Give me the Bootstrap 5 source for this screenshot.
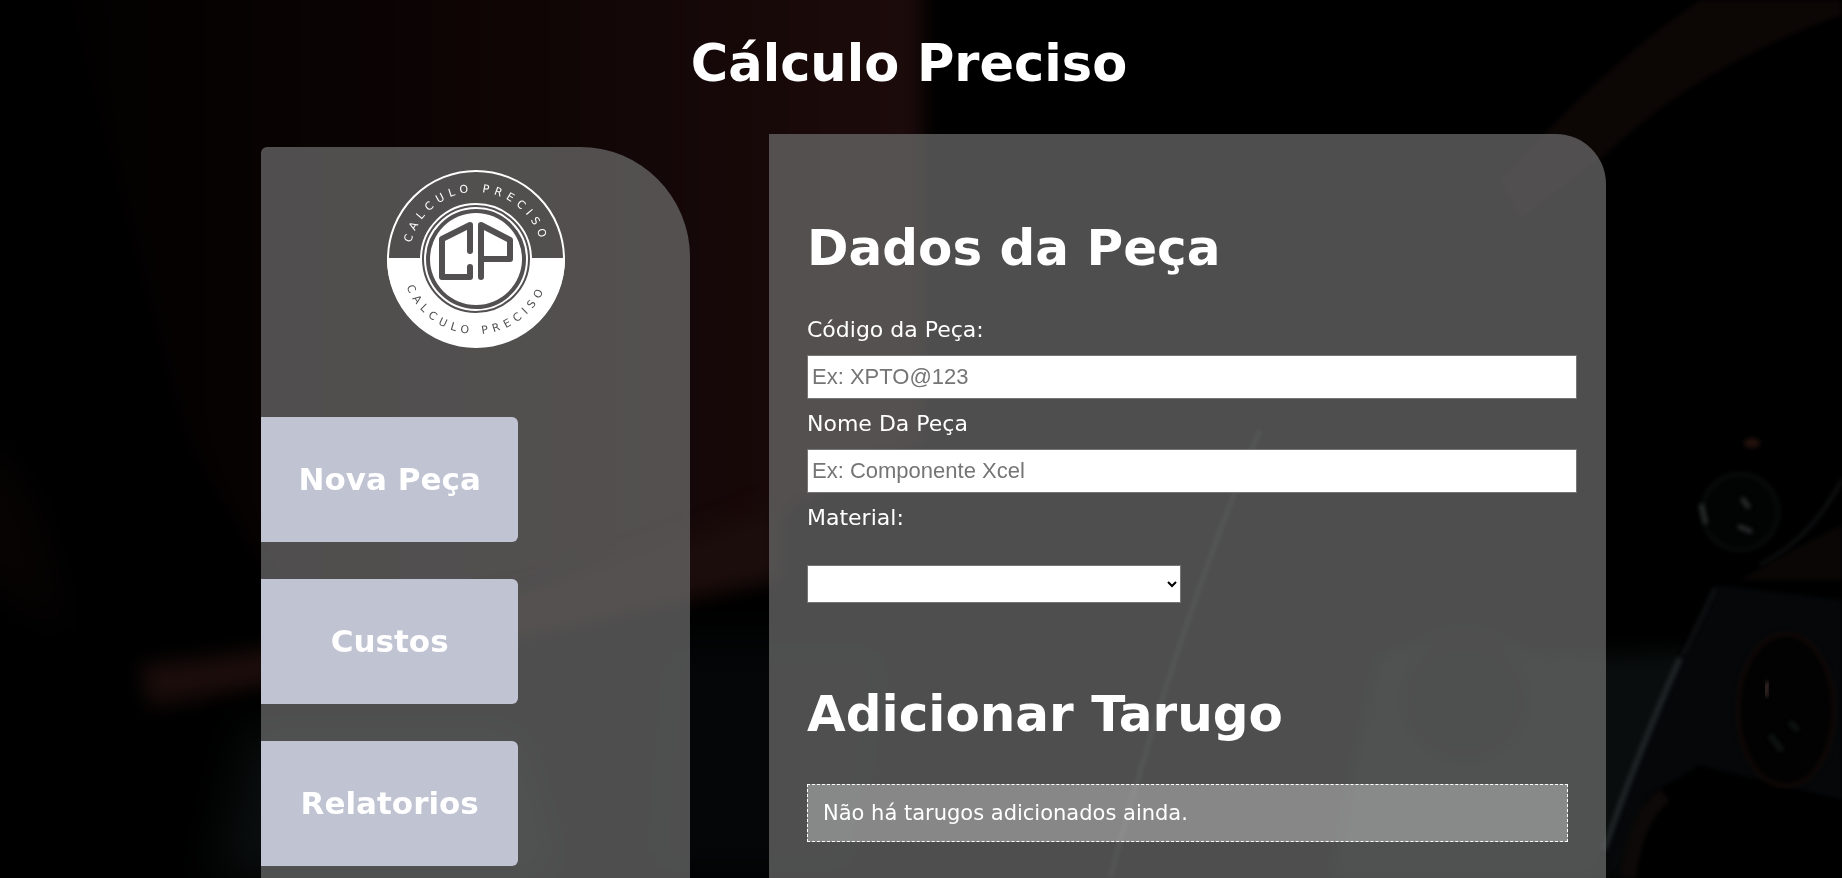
<!DOCTYPE html>
<html lang="pt-BR">
<head>
<meta charset="utf-8">
<meta name="viewport" content="width=device-width, initial-scale=1">
<title>Cálculo Preciso</title>
<link rel="stylesheet" href="https://cdn.jsdelivr.net/npm/bootstrap@5.3.0/dist/css/bootstrap.min.css">
<style>
  body { background: #000; color: #fff; font-family: "DejaVu Sans", sans-serif; font-size: 21px; line-height: 24px; }
  .backdrop-art { z-index: -1; }
  .backdrop-art filter { color-interpolation-filters: sRGB; }
  .site-title, .section-title { font-size: 50px; line-height: 60px; font-weight: 700; }
  .site-title { font-size: 51px; }
  .section-title { margin-bottom: 40px; }
  .page-header { padding: 34px 24px 40px 0; }
  .workspace { display: grid; grid-template-columns: 261fr 429fr 79fr minmax(0, 837fr) 236fr; }
  .panel-side, .panel-main { background: rgba(111, 111, 111, .7); }
  .panel-side { grid-column: 2; margin-top: 13px; padding: 23px 0 11px; border-radius: 6px 110px 0 0; }
  .panel-main { grid-column: 4; padding: 84px 29px 34px 38px; border-radius: 0 50px 0 0; }
  .brand-mark { width: 178px; height: 178px; margin-bottom: 69px; }
  .brand-mark text { font-family: "DejaVu Sans", sans-serif; font-size: 11px; letter-spacing: 5px; }
  .side-menu { gap: 37px; }
  .side-btn { width: 60%; height: 125px; padding: 0; border: 0; border-radius: 0 6px 6px 0; background: #c0c3d2; color: #fff; font-size: 31px; font-weight: 700; }
  .side-btn:hover { background: #a9aec4; color: #fff; }
  .field-label { margin-bottom: 13px; font-size: 22px; }
  .field-box { border: 1px solid #767676; border-radius: 0; background: #fff; font-family: "Liberation Sans", Arial, sans-serif; font-size: 22px; }
  input.field-box { height: 44px; padding: 0 4px; margin-bottom: 13px; }
  input.field-box::placeholder { color: #757575; opacity: 1; }
  select.field-box { width: 374px; max-width: 100%; height: 38px; margin-top: 35px; margin-bottom: 81px; }
  .empty-note { margin-right: 9px; padding: 16px 15px; border: 1px dashed #fff; background: rgba(255, 255, 255, .32); }
  @media (max-width: 991px) {
    .workspace { grid-template-columns: 1fr; gap: 24px; padding: 0 16px; }
    .panel-side, .panel-main { grid-column: 1; }
  }
</style>
</head>
<body class="min-vh-100 d-flex flex-column">

<svg class="backdrop-art position-fixed top-0 start-0 w-100 h-100" viewBox="0 0 1842 878" preserveAspectRatio="xMidYMid slice" aria-hidden="true">
  <defs>
    <filter id="haze" x="-30%" y="-30%" width="160%" height="160%"><feGaussianBlur stdDeviation="22"/></filter>
    <filter id="soft" x="-30%" y="-30%" width="160%" height="160%"><feGaussianBlur stdDeviation="10"/></filter>
    <filter id="edge" x="-30%" y="-30%" width="160%" height="160%"><feGaussianBlur stdDeviation="2"/></filter>
    <linearGradient id="door" x1="0" x2="1"><stop offset="0" stop-color="#020000"/><stop offset=".45" stop-color="#0d0404"/><stop offset="1" stop-color="#1d0b0b"/></linearGradient>
  </defs>
  <rect width="1842" height="878" fill="#000001"/>
  <!-- red bodywork on the left -->
  <path d="M60-30H922V440L700 550 300 620 190 440Z" fill="url(#door)" filter="url(#soft)"/>
  <path d="M-30 420L30 500 70 640-30 560Z" fill="#080303" filter="url(#haze)"/>
  <path d="M140 665Q430 640 780 500V580Q480 650 150 706Z" fill="#1b0d0b" filter="url(#soft)"/>
  <path d="M250 730H520L560 878H215Z" fill="#0a0e0e" filter="url(#haze)"/>
  <path d="M660 640H900L860 878H640Z" fill="#040607" filter="url(#haze)"/>
  <!-- wheel arch on the right -->
  <path d="M1500 180Q1610 60 1700 0H1842V15Q1700 65 1605 155L1520 220Z" fill="#0c0605" filter="url(#edge)"/>
  <!-- console and gear knobs -->
  <path d="M1260 430Q1180 620 1110 878" fill="none" stroke="#1c2020" stroke-width="4" filter="url(#edge)"/>
  <path d="M1380 650L1600 655 1700 650 1620 878H1330Z" fill="#090d0d" filter="url(#soft)"/>
  <ellipse cx="1465" cy="700" rx="70" ry="68" fill="#030404" stroke="#0e1212" stroke-width="6" filter="url(#soft)"/>
  <path d="M1715 585L1842 600V800L1700 765 1640 800 1606 878H1590L1680 660Z" fill="#050709" filter="url(#edge)"/>
  <path d="M1680 658Q1635 760 1604 850" fill="none" stroke="#1f2425" stroke-width="6" filter="url(#edge)"/>
  <path d="M1715 588L1683 655M1842 480Q1810 540 1760 565" fill="none" stroke="#131416" stroke-width="3" filter="url(#edge)"/>
  <path d="M1740 580Q1800 545 1842 525V580Z" fill="#0a0606" filter="url(#edge)"/>
  <circle cx="1740" cy="512" r="38" fill="#020303" stroke="#090b0b" stroke-width="4" filter="url(#edge)"/>
  <path d="M1742 498l7 10M1738 526l14 6M1701 504l5 20" stroke="#282c2c" stroke-width="5" filter="url(#edge)"/>
  <ellipse cx="1752" cy="443" rx="8" ry="5" fill="#21110c" filter="url(#edge)"/>
  <ellipse cx="1786" cy="710" rx="48" ry="76" fill="#020202" stroke="#120907" stroke-width="4" filter="url(#edge)"/>
  <path d="M1768 682q-4 10 0 14" fill="none" stroke="#3a2c28" stroke-width="5" filter="url(#edge)"/>
  <path d="M1770 735l12 16M1790 722l8 8" stroke="#121616" stroke-width="5" filter="url(#edge)"/>
  <path d="M1640 878Q1640 800 1710 780L1842 805V878Z" fill="#000" filter="url(#edge)"/>
  <path d="M1628 878Q1636 815 1665 795" fill="none" stroke="#0d0908" stroke-width="16" filter="url(#edge)"/>
</svg>

<header class="page-header text-center">
  <h1 class="site-title m-0">Cálculo Preciso</h1>
</header>

<div class="workspace flex-grow-1">
  <aside class="panel-side">
    <svg class="brand-mark d-block mx-auto" viewBox="-89 -89 178 178" role="img" aria-label="Calculo Preciso">
      <defs>
        <path id="arc-top" d="M-67 20V0A67 67 0 0 1 67 0V20"/>
        <path id="arc-bottom" d="M-75 -20V0A75 75 0 0 0 75 0V-20"/>
      </defs>
      <circle r="88" fill="none" stroke="#fff" stroke-width="2"/>
      <path d="M-89-1H-55A55 55 0 0 0 55-1H89A89 89 0 0 1-89-1Z" fill="#fff"/>
      <circle r="55" fill="#525050" stroke="#fff" stroke-width="2"/>
      <circle r="51" fill="none" stroke="#fff" stroke-width="2"/>
      <circle r="46" fill="#fff"/>
      <g fill="none" stroke="#525050" stroke-width="6" stroke-linecap="round" stroke-linejoin="round">
        <path d="M-6-8V-34L-34-20V18H-6V8"/>
        <path d="M5 18V-34L34-19V0H5"/>
      </g>
      <text fill="#fff" text-anchor="middle"><textPath href="#arc-top" startOffset="50%">CALCULO PRECISO</textPath></text>
      <text fill="#525050" text-anchor="middle"><textPath href="#arc-bottom" startOffset="50%">CALCULO PRECISO</textPath></text>
    </svg>
    <nav class="side-menu d-flex flex-column align-items-start" aria-label="Menu principal">
      <button type="button" class="btn side-btn">Nova Peça</button>
      <button type="button" class="btn side-btn">Custos</button>
      <button type="button" class="btn side-btn">Relatorios</button>
    </nav>
  </aside>

  <main class="panel-main">
    <form>
      <h2 class="section-title">Dados da Peça</h2>
      <label class="field-label d-block" for="codigo">Código da Peça:</label>
      <input class="field-box d-block w-100" id="codigo" type="text" placeholder="Ex: XPTO@123">
      <label class="field-label d-block" for="nome">Nome Da Peça</label>
      <input class="field-box d-block w-100" id="nome" type="text" placeholder="Ex: Componente Xcel">
      <label class="field-label d-block" for="material">Material:</label>
      <select class="field-box d-block" id="material"><option></option></select>
    </form>
    <section>
      <h2 class="section-title">Adicionar Tarugo</h2>
      <p class="empty-note mb-0">Não há tarugos adicionados ainda.</p>
    </section>
  </main>
</div>

<script src="https://cdn.jsdelivr.net/npm/bootstrap@5.3.0/dist/js/bootstrap.bundle.min.js"></script>
</body>
</html>
